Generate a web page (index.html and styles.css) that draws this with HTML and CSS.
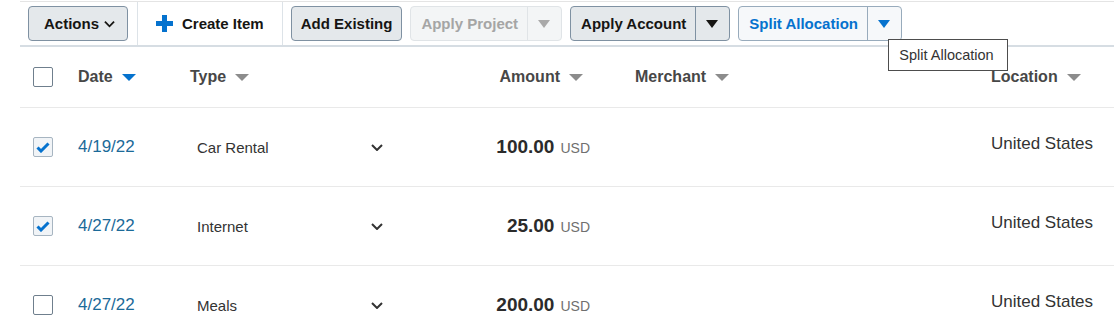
FILE: index.html
```html
<!DOCTYPE html>
<html lang="en">
<head>
  <meta charset="UTF-8">
  <title>Expense Items</title>
  <link rel="stylesheet" href="styles.css">
</head>
<body>
  <div class="page">
    <div class="toolbar">
      <button class="btn btn-actions">Actions
        <svg class="chev" width="12" height="8" viewBox="0 0 12 8"><path d="M1 1.5 L6 6.5 L11 1.5" fill="none" stroke="#161513" stroke-width="2"/></svg>
      </button>
      <span class="sep first"></span>
      <button class="btn-flat">
        <svg width="17" height="17" viewBox="0 0 17 17"><path d="M6 0h5v6h6v5h-6v6h-5v-6h-6v-5h6z" fill="#0572ce"/></svg>
        Create Item
      </button>
      <span class="sep"></span>
      <button class="btn">Add Existing</button>
      <div class="split disabled">
        <span class="split-main">Apply Project</span>
        <span class="split-arrow"><i class="tri"></i></span>
      </div>
      <div class="split">
        <span class="split-main">Apply Account</span>
        <span class="split-arrow"><i class="tri"></i></span>
      </div>
      <div class="split split-blue">
        <span class="split-main">Split Allocation</span>
        <span class="split-arrow"><i class="tri"></i></span>
        <div class="tooltip">Split Allocation</div>
      </div>
    </div>

    <div class="grid-row head">
      <div class="cell cb-cell"><span class="checkbox"></span></div>
      <div class="cell th">Date <i class="sort active"></i></div>
      <div class="cell th">Type <i class="sort"></i></div>
      <div class="cell th th-amount">Amount <i class="sort"></i></div>
      <div class="cell th">Merchant <i class="sort"></i></div>
      <div class="cell th">Location <i class="sort"></i></div>
    </div>

    <div class="grid-row item">
      <div class="cell cb-cell"><span class="checkbox checked"><svg width="14" height="11" viewBox="0 0 14 11"><path d="M1.5 5.5 L5 9 L12.5 1.5" fill="none" stroke="#0572ce" stroke-width="3"/></svg></span></div>
      <div class="cell date">4/19/22</div>
      <div class="cell"><div class="type-select">Car Rental <svg width="12" height="7" viewBox="0 0 12 7"><path d="M1 1 L6 6 L11 1" fill="none" stroke="#333" stroke-width="2"/></svg></div></div>
      <div class="cell amount"><b>100.00</b><span class="cur">USD</span></div>
      <div class="cell"></div>
      <div class="cell location">United States</div>
    </div>

    <div class="grid-row item">
      <div class="cell cb-cell"><span class="checkbox checked"><svg width="14" height="11" viewBox="0 0 14 11"><path d="M1.5 5.5 L5 9 L12.5 1.5" fill="none" stroke="#0572ce" stroke-width="3"/></svg></span></div>
      <div class="cell date">4/27/22</div>
      <div class="cell"><div class="type-select">Internet <svg width="12" height="7" viewBox="0 0 12 7"><path d="M1 1 L6 6 L11 1" fill="none" stroke="#333" stroke-width="2"/></svg></div></div>
      <div class="cell amount"><b>25.00</b><span class="cur">USD</span></div>
      <div class="cell"></div>
      <div class="cell location">United States</div>
    </div>

    <div class="grid-row item">
      <div class="cell cb-cell"><span class="checkbox"></span></div>
      <div class="cell date">4/27/22</div>
      <div class="cell"><div class="type-select">Meals <svg width="12" height="7" viewBox="0 0 12 7"><path d="M1 1 L6 6 L11 1" fill="none" stroke="#333" stroke-width="2"/></svg></div></div>
      <div class="cell amount"><b>200.00</b><span class="cur">USD</span></div>
      <div class="cell"></div>
      <div class="cell location">United States</div>
    </div>
  </div>
</body>
</html>
```

FILE: styles.css
```css
/* base */
:root {
  --brand: #0572ce;
  --text: #161513;
  --body-text: #333;
  --btn-bg: #e4e8eb;
  --btn-border: #7f91a2;
  --row-line: #e9e9e9;
}

body {
  margin: 0;
  font-family: 'Liberation Sans', Arial, sans-serif;
  color: var(--body-text);
  background: #fff;
  overflow: hidden;
}

.page {
  padding: 1px 0 0 20px;
}

/* toolbar */
.toolbar {
  display: flex;
  align-items: center;
  gap: 8px;
  height: 43px;
  padding-left: 8px;
  border-top: 1px solid #e4e4e4;
  border-bottom: 2px solid #d6dde3;
}

.sep {
  align-self: stretch;
  width: 1px;
  background: #dde3e8;
}

.sep.first {
  margin-left: 1px;
}

.btn,
.btn-flat,
.split {
  height: 35px;
  box-sizing: border-box;
  font-family: inherit;
  font-size: 15px;
  font-weight: bold;
  color: var(--text);
}

.btn {
  display: flex;
  align-items: center;
  padding: 0 9px;
  background: var(--btn-bg);
  border: 1px solid var(--btn-border);
  border-radius: 4px;
}

.btn-actions {
  width: 100px;
  gap: 5px;
  padding: 0 12px 0 15px;
}

.btn-flat {
  display: flex;
  align-items: center;
  gap: 9px;
  padding: 0 10px;
  background: none;
  border: none;
}

.split {
  position: relative;
  display: flex;
  align-items: stretch;
  background: var(--btn-bg);
  border: 1px solid var(--btn-border);
  border-radius: 4px;
}

.split-main {
  display: flex;
  align-items: center;
  padding: 0 9px 0 10px;
}

.split-arrow {
  display: flex;
  align-items: center;
  padding: 0 11px 0 10px;
  border-left: 1px solid var(--btn-border);
}

.tri {
  width: 0;
  height: 0;
  border-left: 6px solid transparent;
  border-right: 6px solid transparent;
  border-top: 8px solid var(--text);
}

.split.disabled {
  background: #f3f5f6;
  border-color: #e0e4e7;
  color: #a5a5a5;
}

.split.disabled .split-arrow {
  border-left-color: #e0e4e7;
}

.split.disabled .tri {
  border-top-color: #a9a9a9;
}

.split-blue {
  background: #f6f8fa;
  border-color: #98abbc;
  color: var(--brand);
}

.split-blue .split-arrow {
  border-left-color: #98abbc;
}

.split-blue .tri {
  border-top-color: var(--brand);
}

.tooltip {
  position: absolute;
  top: calc(100% - 1px);
  left: 149px;
  width: 120px;
  height: 32px;
  box-sizing: border-box;
  padding: 7px 0 0 10px;
  background: #fff;
  border: 1px solid #4d4d4d;
  font-size: 14.5px;
  font-weight: normal;
  color: #333;
  white-space: nowrap;
  z-index: 5;
}

/* table */
.grid-row {
  display: grid;
  grid-template-columns: 58px 112px 200px 245px 356px 1fr;
  align-items: center;
  border-bottom: 1px solid var(--row-line);
}

.grid-row.head {
  height: 60px;
}

.grid-row.item {
  height: 78px;
}

.cb-cell {
  padding-left: 13px;
}

.checkbox {
  display: flex;
  align-items: center;
  justify-content: center;
  width: 20px;
  height: 20px;
  box-sizing: border-box;
  border: 1px solid #6f7f8d;
  border-radius: 2px;
  background: #fff;
}

.checkbox.checked {
  border-color: #a7b5c1;
  background: #f1f4f7;
}

.th {
  display: flex;
  align-items: center;
  gap: 9px;
  font-size: 16px;
  font-weight: bold;
  color: #474747;
}

.th-amount {
  justify-content: flex-end;
  padding-right: 52px;
}

.sort {
  width: 0;
  height: 0;
  border-left: 7px solid transparent;
  border-right: 7px solid transparent;
  border-top: 7px solid #8c8c8c;
}

.sort.active {
  border-top-color: var(--brand);
}

.date {
  font-size: 17px;
  color: #1b6a99;
}

.type-select {
  display: flex;
  align-items: center;
  justify-content: space-between;
  width: 193px;
  box-sizing: border-box;
  padding-left: 7px;
  font-size: 15px;
  color: #333;
}

.amount {
  text-align: right;
  padding-right: 45px;
}

.amount b {
  font-size: 19px;
  color: #2b2b2b;
}

.cur {
  margin-left: 6px;
  font-size: 14px;
  color: #6f6f6f;
}

.location {
  padding-bottom: 7px;
  font-size: 17px;
  color: #333;
  white-space: nowrap;
}
```
